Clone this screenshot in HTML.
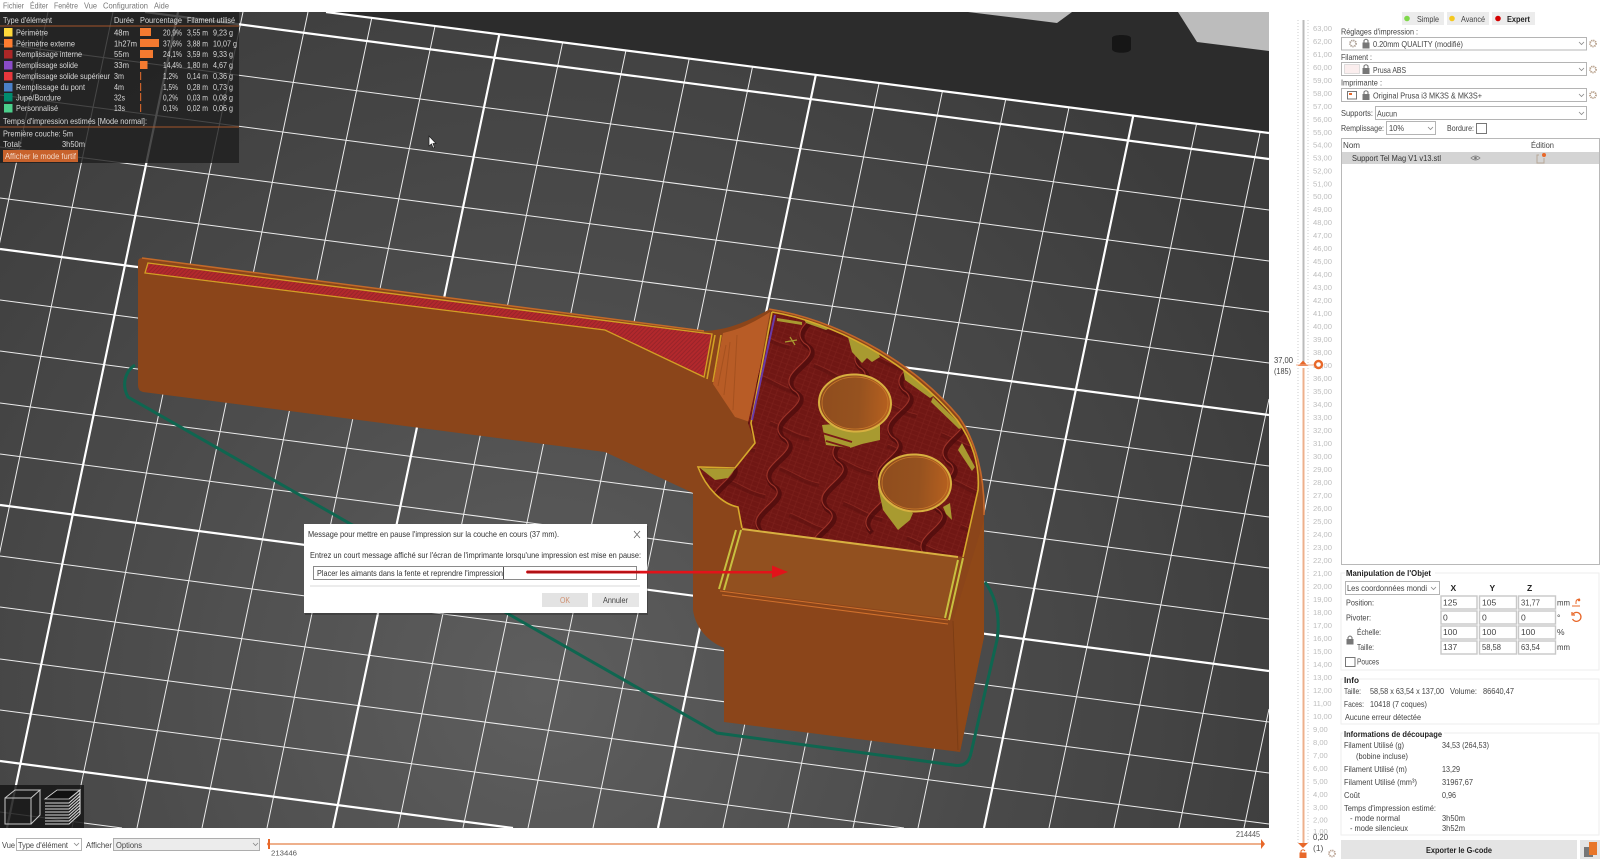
<!DOCTYPE html>
<html lang="fr"><head><meta charset="utf-8"><title>PrusaSlicer</title>
<style>
html,body{margin:0;padding:0;background:#fff;width:1600px;height:859px;overflow:hidden}
#f{position:absolute;left:0;top:0;width:1600px;height:859px;overflow:hidden}
svg{display:block;position:absolute;left:0;top:0;overflow:hidden;filter:blur(.3px)}
text{font-family:"Liberation Sans",sans-serif;font-size:8.5px;fill:#444}
.lg text{fill:#d8d8d8}
.b{font-weight:700;fill:#222}
.t text{font-size:7.6px;fill:#bdbdbd}
.box{fill:#fff;stroke:#b4b4b4;stroke-width:1}
.inp{fill:#fff;stroke:#c8c8c8;stroke-width:1.4}
.chev{fill:none;stroke:#888;stroke-width:.8}
</style></head><body><div id="f">
<svg width="1600" height="859" viewBox="0 0 1600 859" xmlns="http://www.w3.org/2000/svg">
<defs>
<radialGradient id="pl" gradientUnits="userSpaceOnUse" cx="540" cy="690" r="820"><stop offset="0" stop-color="#5e5e5e"/><stop offset=".55" stop-color="#4a4a4a"/><stop offset="1" stop-color="#3c3c3c"/></radialGradient>
<clipPath id="vp"><polygon points="0,12 1269,12 1269,828 0,828"/></clipPath>
<clipPath id="plate"><polygon points="0,12 326,12 1269,133 1269,828 0,828"/></clipPath>
<clipPath id="inf"><path id="infp" d="M772,312 C830,322 905,358 957,420 C972,440 980,465 978,490 L963,557 L742,528 L738,507 C722,504 706,488 698,467 L735,468 L755,443 L748,423 Z"/></clipPath>
<pattern id="hat" width="3" height="3" patternUnits="userSpaceOnUse" patternTransform="rotate(45)"><rect width="3" height="3" fill="#b2282c"/><rect width="1" height="3" fill="#98242a"/></pattern>
<pattern id="tex" width="14" height="14" patternUnits="userSpaceOnUse" patternTransform="rotate(20)"><rect width="14" height="14" fill="#701714"/><path d="M0,3H14M0,8H14M0,12H14M4,0V14M10,0V14" stroke="#7e201c" stroke-width=".6"/></pattern>
<pattern id="cell" width="55" height="47" patternUnits="userSpaceOnUse" patternTransform="rotate(-12)"><path d="M5,10C18,18 25,28 40,34" fill="none" stroke="#5a100e" stroke-width="4" stroke-opacity=".55"/><path d="M6,8C19,16 26,26 41,32" fill="none" stroke="#8f2a22" stroke-width=".7"/></pattern>
<path id="w" d="M815,296c24,14 -30,28 -11,47c24,14 -30,28 -11,47c24,14 -30,28 -11,47c24,14 -30,28 -11,47c24,14 -30,28 -11,47"/>
<g id="wv"><use href="#w" fill="none" stroke="#4f0c0c" stroke-width="5" stroke-opacity=".8" transform="translate(2,2)"/><use href="#w" fill="none" stroke="#9c3228" stroke-width="1.100"/></g>
<linearGradient id="disc" x1="0" x2="1" y1="0" y2="0"><stop offset="0" stop-color="#8f4d1e"/><stop offset=".55" stop-color="#96521f"/><stop offset="1" stop-color="#b8611f"/></linearGradient>
</defs>

<!-- viewport -->
<g clip-path="url(#vp)">
<rect x="0" y="12" width="1269" height="816" fill="#2c2c2c"/>
<polygon points="968,12 1057,23 1072,12" fill="#bcbcbc"/>
<polygon points="1178,12 1197,42 1269,51 1269,12" fill="#bcbcbc"/>
<path d="M1112,38C1112,34 1131,34 1131,38V49C1131,54 1112,54 1112,49Z" fill="#161616"/>
<g clip-path="url(#plate)">
<rect x="0" y="12" width="1269" height="816" fill="url(#pl)"/>
<!-- thin verticals -->
<path fill="none" stroke="#ececec" stroke-width="1" d="M-123,828L48,12M-58,828L113,12M72,828L243,12M137,828L308,12M202,828L373,12M267,828L438,12M398,828L569,12M463,828L634,12M528,828L699,12M593,828L764,12M723,828L894,12M788,828L959,12M853,828L1024,12M918,828L1089,12M1049,828L1220,12M1114,828L1269,90M1179,828L1269,399M1244,828L1269,709"/>
<!-- thin horizontals -->
<path fill="none" stroke="#ececec" stroke-width="1" d="M0,44L1269,210M0,95L1269,261M0,147L1269,312M0,198L1269,363M0,300L1269,466M0,351L1269,517M0,403L1269,568M0,454L1269,619M0,556L1269,722M0,607L1269,773M0,659L1269,824M0,710L904,828M0,812L122,828"/>
<!-- thick -->
<path fill="none" stroke="#fff" stroke-width="2.200" d="M7,828L178,12M333,828L504,12M658,828L829,12M984,828L1155,12M145,12L1269,159M0,249L1269,415M0,505L1269,671M0,761L513,828"/>
</g>
<path d="M326,12L1269,133" stroke="#fff" stroke-width="2.200" fill="none"/>

<!-- skirt -->
<path d="M135,365C124,372 122,386 128,397L717,733L953,765Q968,768 971,753L997,640C1000,620 998,600 985,582" fill="none" stroke="#0f6650" stroke-width="3"/>

<!-- model body -->
<path d="M142,258L704,331C730,330 750,320 770,309C830,319 907,355 959,417C975,440 985,475 984,520L984,637L960,752L724,722L724,648C705,640 695,625 693,610L693,493L605,452L143,392Q138,391 138,385L138,262Q138,258 142,258Z" fill="#8b451a"/>
<path d="M142,258L704,331" stroke="#c46a28" stroke-width="1.500" fill="none"/>
<!-- band -->
<polygon points="148,263 712,334 704,377 605,330 145,273" fill="url(#hat)" stroke="#d2a024" stroke-width="1.300"/>
<path d="M715,335L707,379M721,335L713,382" stroke="#d2a024" stroke-width="1.600" fill="none"/>
<path d="M723,333C742,329 756,321 770,312L750,422L735,417L713,384Z" fill="#b85c26"/>
<path d="M726,345L718,386M730,342L724,395M737,335L733,410" stroke="#a5511f" stroke-width="1" fill="none"/>
<!-- infill -->
<use href="#infp" fill="url(#tex)"/>
<g clip-path="url(#inf)">
<rect x="690" y="300" width="300" height="260" fill="url(#cell)"/>
<use href="#wv" transform="translate(-165,24)"/><use href="#wv" transform="translate(-110,0)"/><use href="#wv" transform="translate(-55,24)"/><use href="#wv"/><use href="#wv" transform="translate(55,24)"/><use href="#wv" transform="translate(110,0)"/><use href="#wv" transform="translate(165,24)"/><use href="#wv" transform="translate(220,0)"/>
<!-- olive patches -->
<path d="M848,337L853,337L877,350L880,357L872,362L867,358L862,363L852,352Z" fill="#a89a30"/>
<path d="M777,318L802,322L802,325L777,321Z" fill="#a89a30"/>
<path d="M803,318L830,328L826,330L806,323Z" fill="#a89a30"/>
<path d="M700,468L735,469L728,478L715,480Z" fill="#a89a30"/>
<path d="M903,370L935,395L930,398L905,380Z" fill="#a89a30"/>
<path d="M933,397L963,427L959,429L931,402Z" fill="#a89a30"/>
<path d="M962,443L975,467L972,471L958,450Z" fill="#a89a30"/>
<path d="M822,425L826,445L850,448L862,444L880,440L880,420Z" fill="#a89a30"/>
<path d="M822,433L852,442M826,441L850,448" stroke="#7a1a17" stroke-width="1.800"/>
<path d="M878,487L883,510L898,530L910,520L913,513L900,505Z" fill="#a89a30"/>
<path d="M943,507L950,503L952,520L946,514Z" fill="#a89a30"/>
<path d="M790,337L795,345M785,342L797,340" stroke="#a89a30" stroke-width="1.200"/>
</g>
<path d="M772,312C830,322 905,358 957,420C972,440 980,465 978,490L963,557" fill="none" stroke="#d6a92c" stroke-width="1.600"/>
<path d="M772,312L751,423L755,443L735,468L698,467C706,488 722,504 738,507L742,528" fill="none" stroke="#d6a92c" stroke-width="1.600"/>
<path d="M769,309C830,319 907,355 959,417C975,440 985,475 984,515" fill="none" stroke="#c4672a" stroke-width="1.600"/>
<path d="M775,315L752,420" stroke="#6a3aa8" stroke-width="2" fill="none"/>
<!-- discs -->
<ellipse cx="855" cy="403" rx="36" ry="28.500" fill="url(#disc)" stroke="#d8b040" stroke-width="2" transform="rotate(3 855 403)"/>
<ellipse cx="855" cy="403" rx="33" ry="26" fill="none" stroke="#c8792a" stroke-width=".8"/>
<ellipse cx="915" cy="483" rx="36" ry="28.500" fill="url(#disc)" stroke="#d8b040" stroke-width="2" transform="rotate(3 915 483)"/>
<ellipse cx="915" cy="483" rx="33" ry="26" fill="none" stroke="#c8792a" stroke-width=".8"/>
<!-- box -->
<polygon points="741,529 958,557 946,618 722,590" fill="#92501f"/>
<path d="M742,529L958,557" stroke="#d8b040" stroke-width="2" fill="none"/>
<path d="M741,530L724,590M736,530L719,589" stroke="#c8c040" stroke-width="2" fill="none"/>
<path d="M963,558L949,620M958,560L945,618" stroke="#c8c040" stroke-width="2" fill="none"/>
<path d="M720,591L948,620M722,595L948,624" stroke="#d0702c" stroke-width="1" fill="none"/>
<path d="M953,621L984,520L984,637L960,752Z" fill="#8f4818"/>
<path d="M953,621L958,750" stroke="#7a3c14" stroke-width=".8" fill="none"/>
</g>

<!-- legend -->
<rect x="0" y="12" width="239" height="151" fill="#1e1e1e" fill-opacity=".8"/>
<g class="lg">
<text x="3" y="23" textLength="49" lengthAdjust="spacingAndGlyphs">Type d'élément</text>
<text x="114" y="23" textLength="20" lengthAdjust="spacingAndGlyphs">Durée</text>
<text x="140" y="23" textLength="42" lengthAdjust="spacingAndGlyphs">Pourcentage</text>
<text x="187" y="23" textLength="48" lengthAdjust="spacingAndGlyphs">Filament utilisé</text>
<rect x="0" y="25.500" width="239" height="1" fill="#a3552a"/>
<rect x="4" y="28" width="8.500" height="8.500" fill="#ffd93b"/><rect x="4" y="39" width="8.500" height="8.500" fill="#ff7d30"/><rect x="4" y="50" width="8.500" height="8.500" fill="#ab2727"/><rect x="4" y="61" width="8.500" height="8.500" fill="#8a4cc8"/><rect x="4" y="72" width="8.500" height="8.500" fill="#e8373c"/><rect x="4" y="83" width="8.500" height="8.500" fill="#4a80c8"/><rect x="4" y="93" width="8.500" height="8.500" fill="#008c6e"/><rect x="4" y="104" width="8.500" height="8.500" fill="#4cd08c"/>
<rect x="140" y="28" width="11" height="8" fill="#f47a30"/><rect x="140" y="39" width="19" height="8" fill="#f47a30"/><rect x="140" y="50" width="13" height="8" fill="#f47a30"/><rect x="140" y="61" width="7.500" height="8" fill="#f47a30"/><rect x="140" y="72" width="1.200" height="8" fill="#c8622c"/><rect x="140" y="83" width="1.200" height="8" fill="#c8622c"/><rect x="140" y="93" width="1.200" height="8" fill="#c8622c"/><rect x="140" y="104" width="1.200" height="8" fill="#c8622c"/>
<text x="16" y="35.500" textLength="32" lengthAdjust="spacingAndGlyphs">Périmètre</text>
<text x="16" y="46.500" textLength="59" lengthAdjust="spacingAndGlyphs">Périmètre externe</text>
<text x="16" y="57" textLength="66" lengthAdjust="spacingAndGlyphs">Remplissage interne</text>
<text x="16" y="68" textLength="62" lengthAdjust="spacingAndGlyphs">Remplissage solide</text>
<text x="16" y="79" textLength="94" lengthAdjust="spacingAndGlyphs">Remplissage solide supérieur</text>
<text x="16" y="90" textLength="69" lengthAdjust="spacingAndGlyphs">Remplissage du pont</text>
<text x="16" y="100.500" textLength="45" lengthAdjust="spacingAndGlyphs">Jupe/Bordure</text>
<text x="16" y="111" textLength="42" lengthAdjust="spacingAndGlyphs">Personnalisé</text>
<text x="114" y="35.500" textLength="15" lengthAdjust="spacingAndGlyphs">48m</text><text x="114" y="46.500" textLength="23" lengthAdjust="spacingAndGlyphs">1h27m</text><text x="114" y="57" textLength="15" lengthAdjust="spacingAndGlyphs">55m</text><text x="114" y="68" textLength="15" lengthAdjust="spacingAndGlyphs">33m</text><text x="114" y="79" textLength="10" lengthAdjust="spacingAndGlyphs">3m</text><text x="114" y="90" textLength="10" lengthAdjust="spacingAndGlyphs">4m</text><text x="114" y="100.500" textLength="11" lengthAdjust="spacingAndGlyphs">32s</text><text x="114" y="111" textLength="11" lengthAdjust="spacingAndGlyphs">13s</text>
<text x="163" y="35.500" textLength="19" lengthAdjust="spacingAndGlyphs">20,9%</text><text x="163" y="46.500" textLength="19" lengthAdjust="spacingAndGlyphs">37,6%</text><text x="163" y="57" textLength="19" lengthAdjust="spacingAndGlyphs">24,1%</text><text x="163" y="68" textLength="19" lengthAdjust="spacingAndGlyphs">14,4%</text><text x="163" y="79" textLength="15" lengthAdjust="spacingAndGlyphs">1,2%</text><text x="163" y="90" textLength="15" lengthAdjust="spacingAndGlyphs">1,5%</text><text x="163" y="100.500" textLength="15" lengthAdjust="spacingAndGlyphs">0,2%</text><text x="163" y="111" textLength="15" lengthAdjust="spacingAndGlyphs">0,1%</text>
<text x="187" y="35.500" textLength="21" lengthAdjust="spacingAndGlyphs">3,55 m</text><text x="187" y="46.500" textLength="21" lengthAdjust="spacingAndGlyphs">3,88 m</text><text x="187" y="57" textLength="21" lengthAdjust="spacingAndGlyphs">3,59 m</text><text x="187" y="68" textLength="21" lengthAdjust="spacingAndGlyphs">1,80 m</text><text x="187" y="79" textLength="21" lengthAdjust="spacingAndGlyphs">0,14 m</text><text x="187" y="90" textLength="21" lengthAdjust="spacingAndGlyphs">0,28 m</text><text x="187" y="100.500" textLength="21" lengthAdjust="spacingAndGlyphs">0,03 m</text><text x="187" y="111" textLength="21" lengthAdjust="spacingAndGlyphs">0,02 m</text>
<text x="213" y="35.500" textLength="20" lengthAdjust="spacingAndGlyphs">9,23 g</text><text x="213" y="46.500" textLength="24" lengthAdjust="spacingAndGlyphs">10,07 g</text><text x="213" y="57" textLength="20" lengthAdjust="spacingAndGlyphs">9,33 g</text><text x="213" y="68" textLength="20" lengthAdjust="spacingAndGlyphs">4,67 g</text><text x="213" y="79" textLength="20" lengthAdjust="spacingAndGlyphs">0,36 g</text><text x="213" y="90" textLength="20" lengthAdjust="spacingAndGlyphs">0,73 g</text><text x="213" y="100.500" textLength="20" lengthAdjust="spacingAndGlyphs">0,08 g</text><text x="213" y="111" textLength="20" lengthAdjust="spacingAndGlyphs">0,06 g</text>
<text x="3" y="124" textLength="144" lengthAdjust="spacingAndGlyphs">Temps d'impression estimés [Mode normal]:</text>
<rect x="0" y="126.500" width="239" height="1" fill="#a3552a"/>
<text x="3" y="136.500" textLength="70" lengthAdjust="spacingAndGlyphs">Première couche: 5m</text>
<text x="3" y="147" textLength="19" lengthAdjust="spacingAndGlyphs">Total:</text><text x="62" y="147" textLength="23" lengthAdjust="spacingAndGlyphs">3h50m</text>
<rect x="3" y="150" width="75" height="12" fill="#c8622c"/>
<text x="5" y="159" textLength="71" lengthAdjust="spacingAndGlyphs" style="fill:#f2d8c8">Afficher le mode furtif</text>
</g>

<!-- cursor -->
<path d="M429,136L429,146L431.500,144L433,148L434.500,147.500L433,143.500L436,143.500Z" fill="#fff" stroke="#222" stroke-width=".7"/>

<!-- view toggle -->
<rect x="0" y="785" width="84" height="43" fill="#161616" fill-opacity=".85"/>
<path d="M5,798H31V824H5ZM5,798L15,790H40L31,798M40,790V815L31,824" fill="none" stroke="#c8c8c8" stroke-width="1"/>
<path d="M45,799L57,790H80L69,799Z" fill="#111" stroke="#ddd" stroke-width=".8"/>
<path d="M45,803H69L80,793M45,806H69L80,796M45,809H69L80,799M45,812H69L80,802M45,815H69L80,805M45,818H69L80,808M45,821H69L80,811M45,824H69L80,814M69,799L80,790V814" fill="none" stroke="#d8d8d8" stroke-width="1.100"/>

<!-- dialog -->
<rect x="305" y="526" width="343" height="89" fill="#000" fill-opacity=".22"/>
<rect x="304" y="524" width="343" height="89" fill="#fff"/>
<text x="308" y="537" textLength="251" lengthAdjust="spacingAndGlyphs" style="fill:#333">Message pour mettre en pause l'impression sur la couche en cours (37 mm).</text>
<path d="M634,531L640,538M640,531L634,538" stroke="#666" stroke-width=".8" fill="none"/>
<text x="310" y="558" textLength="331" lengthAdjust="spacingAndGlyphs" style="fill:#333">Entrez un court message affiché sur l'écran de l'imprimante lorsqu'une impression est mise en pause:</text>
<rect x="313.500" y="566.500" width="323" height="13" fill="#fff" stroke="#8a8a8a"/>
<text x="317" y="576" textLength="186" lengthAdjust="spacingAndGlyphs" style="fill:#333">Placer les aimants dans la fente et reprendre l'impression</text>
<rect x="503" y="567" width=".8" height="12" fill="#222"/>
<rect x="310" y="585.500" width="330" height="1" fill="#d8d8d8"/>
<rect x="542" y="593" width="46" height="14" fill="#e3e3e3"/><text x="560" y="603" textLength="10" lengthAdjust="spacingAndGlyphs" style="fill:#d09070">OK</text>
<rect x="592" y="593" width="47" height="14" fill="#e6e6e6"/><text x="603" y="603" textLength="25" lengthAdjust="spacingAndGlyphs" style="fill:#444">Annuler</text>

<!-- red arrow -->
<path d="M527,570.500L772,571V565.500L788,572L772,578V573.500L527,573.500Q525,572 527,570.500Z" fill="#e2131a"/>
<path d="M527,571L640,571.500V573L527,573.500Z" fill="#b01015"/>

<!-- top menu -->
<rect x="0" y="0" width="1600" height="12" fill="#fff"/>
<text x="3" y="8.500" textLength="21" lengthAdjust="spacingAndGlyphs" style="fill:#777">Fichier</text>
<text x="30" y="8.500" textLength="18" lengthAdjust="spacingAndGlyphs" style="fill:#777">Éditer</text>
<text x="54" y="8.500" textLength="24" lengthAdjust="spacingAndGlyphs" style="fill:#777">Fenêtre</text>
<text x="84" y="8.500" textLength="13" lengthAdjust="spacingAndGlyphs" style="fill:#777">Vue</text>
<text x="103" y="8.500" textLength="45" lengthAdjust="spacingAndGlyphs" style="fill:#777">Configuration</text>
<text x="154" y="8.500" textLength="15" lengthAdjust="spacingAndGlyphs" style="fill:#777">Aide</text>

<!-- bottom strip -->
<text x="2" y="848" textLength="13" lengthAdjust="spacingAndGlyphs">Vue</text>
<rect x="16.500" y="838.500" width="65" height="12" class="box"/>
<text x="18" y="848" textLength="50" lengthAdjust="spacingAndGlyphs">Type d'élément</text><path class="chev" d="M74,843l2.500,2.500l2.500,-2.500"/>
<text x="86" y="848" textLength="26" lengthAdjust="spacingAndGlyphs">Afficher</text>
<rect x="113.500" y="838.500" width="146" height="12" fill="#ececec" stroke="#adadad"/>
<text x="116" y="848" textLength="26" lengthAdjust="spacingAndGlyphs">Options</text><path class="chev" d="M253,843l2.500,2.500l2.500,-2.500"/>
<rect x="268" y="843" width="994" height="2" fill="#eeb08c"/>
<path d="M270,839V849L267,844Z" fill="#e8682a"/><rect x="268" y="839" width="2" height="10" fill="#e8682a"/>
<path d="M1261,839L1265,844L1261,849Z" fill="#e8682a"/>
<text x="271" y="855.500" textLength="26" lengthAdjust="spacingAndGlyphs" style="fill:#555;font-size:7.5px">213446</text>
<text x="1236" y="837" textLength="24" lengthAdjust="spacingAndGlyphs" style="fill:#555">214445</text>

<!-- vertical slider -->
<path d="M1298,20V845M1308,20V845" stroke="#ccc" stroke-width="1" stroke-dasharray="1 2" fill="none"/>
<rect x="1302.500" y="20" width="2" height="342" fill="#bbb"/>
<rect x="1302.500" y="368" width="2" height="475" fill="#eeb08c"/>
<path d="M1298,366L1303,360.500L1308,366Z" fill="#e8682a"/><rect x="1296" y="364.500" width="20" height="1" fill="#f0b090"/>
<path d="M1298,843L1303,848L1308,843Z" fill="#e8682a"/>
<rect x="1299.500" y="852.500" width="7" height="5.500" fill="#e8682a"/><path d="M1301,852.500v-1.500q2,-2.500 4,0" fill="none" stroke="#e8682a" stroke-width="1.100"/>
<circle cx="1332" cy="853.500" r="3" fill="none" stroke="#b8a090" stroke-width="1.800" stroke-dasharray="1.200 .8"/>
<text x="1274" y="363" textLength="19" lengthAdjust="spacingAndGlyphs">37,00</text>
<text x="1274" y="374" textLength="17" lengthAdjust="spacingAndGlyphs">(185)</text>
<text x="1313" y="840" textLength="15" lengthAdjust="spacingAndGlyphs">0,20</text>
<text x="1313" y="851" style="fill:#555">(1)</text>
<g class="t">
<text x="1313" y="31">63,00</text><text x="1313" y="44">62,00</text><text x="1313" y="57">61,00</text><text x="1313" y="70">60,00</text><text x="1313" y="83">59,00</text><text x="1313" y="96">58,00</text><text x="1313" y="109">57,00</text><text x="1313" y="122">56,00</text><text x="1313" y="135">55,00</text><text x="1313" y="147.500">54,00</text><text x="1313" y="160.500">53,00</text><text x="1313" y="173.500">52,00</text><text x="1313" y="186.500">51,00</text><text x="1313" y="199">50,00</text><text x="1313" y="212">49,00</text><text x="1313" y="225">48,00</text><text x="1313" y="238">47,00</text><text x="1313" y="251">46,00</text><text x="1313" y="264">45,00</text><text x="1313" y="277">44,00</text><text x="1313" y="290">43,00</text><text x="1313" y="303">42,00</text><text x="1313" y="316">41,00</text><text x="1313" y="329">40,00</text><text x="1313" y="342">39,00</text><text x="1313" y="355">38,00</text><text x="1313" y="368">37,00</text><text x="1313" y="381">36,00</text><text x="1313" y="394">35,00</text><text x="1313" y="407">34,00</text><text x="1313" y="420">33,00</text><text x="1313" y="433">32,00</text><text x="1313" y="446">31,00</text><text x="1313" y="459">30,00</text><text x="1313" y="472">29,00</text><text x="1313" y="485">28,00</text><text x="1313" y="498">27,00</text><text x="1313" y="511">26,00</text><text x="1313" y="524">25,00</text><text x="1313" y="537">24,00</text><text x="1313" y="550">23,00</text><text x="1313" y="563">22,00</text><text x="1313" y="576">21,00</text><text x="1313" y="589">20,00</text><text x="1313" y="602">19,00</text><text x="1313" y="615">18,00</text><text x="1313" y="628">17,00</text><text x="1313" y="641">16,00</text><text x="1313" y="654">15,00</text><text x="1313" y="667">14,00</text><text x="1313" y="680">13,00</text><text x="1313" y="693">12,00</text><text x="1313" y="706">11,00</text><text x="1313" y="719">10,00</text><text x="1313" y="732">9,00</text><text x="1313" y="745">8,00</text><text x="1313" y="758">7,00</text><text x="1313" y="771">6,00</text><text x="1313" y="784">5,00</text><text x="1313" y="797">4,00</text><text x="1313" y="810">3,00</text><text x="1313" y="822.500">2,00</text><text x="1313" y="834">1,00</text>
</g>
<circle cx="1318.500" cy="364.500" r="3.500" fill="#fff" stroke="#e8682a" stroke-width="2.400"/>

<!-- mode buttons -->
<rect x="1402" y="12" width="42" height="13" fill="#ececec"/><rect x="1447" y="12" width="42" height="13" fill="#ececec"/><rect x="1492" y="12" width="43" height="13" fill="#ececec"/>
<circle cx="1407" cy="18.500" r="2.800" fill="#7fd84a"/><circle cx="1452" cy="18.500" r="2.800" fill="#f4c820"/><circle cx="1498" cy="18.500" r="2.800" fill="#d40000"/>
<text x="1417" y="22" textLength="22" lengthAdjust="spacingAndGlyphs">Simple</text><text x="1461" y="22" textLength="24" lengthAdjust="spacingAndGlyphs">Avancé</text><text x="1507" y="22" textLength="23" lengthAdjust="spacingAndGlyphs" class="b">Expert</text>

<!-- settings -->
<text x="1341" y="34.500" textLength="77" lengthAdjust="spacingAndGlyphs">Réglages d'impression :</text>
<rect x="1341.500" y="37.500" width="245" height="12.500" class="box"/>
<circle cx="1353" cy="43.500" r="3" fill="none" stroke="#a89a8e" stroke-width="1.800" stroke-dasharray="1.200 .8"/>
<rect x="1362.500" y="42.500" width="7" height="6" fill="#777"/><path d="M1364,42.500v-2q2,-2.500 4,0v2" fill="none" stroke="#777" stroke-width="1.100"/>
<text x="1373" y="47" textLength="90" lengthAdjust="spacingAndGlyphs">0.20mm QUALITY (modifié)</text><path class="chev" d="M1579,42l2.500,2.500l2.500,-2.500"/>
<circle cx="1593" cy="43.500" r="3" fill="none" stroke="#b49c86" stroke-width="1.800" stroke-dasharray="1.200 .8"/>
<text x="1341" y="60" textLength="31" lengthAdjust="spacingAndGlyphs">Filament :</text>
<rect x="1341.500" y="62.500" width="245" height="13" class="box"/>
<rect x="1344.500" y="64.500" width="15" height="9" fill="#fbeeee" stroke="#ccc" stroke-width=".6"/>
<rect x="1362.500" y="68" width="7" height="6" fill="#777"/><path d="M1364,68v-2q2,-2.500 4,0v2" fill="none" stroke="#777" stroke-width="1.100"/>
<text x="1373" y="73" textLength="33" lengthAdjust="spacingAndGlyphs">Prusa ABS</text><path class="chev" d="M1579,68l2.500,2.500l2.500,-2.500"/>
<circle cx="1593" cy="69.500" r="3" fill="none" stroke="#b49c86" stroke-width="1.800" stroke-dasharray="1.200 .8"/>
<text x="1341" y="85.500" textLength="41" lengthAdjust="spacingAndGlyphs">Imprimante :</text>
<rect x="1341.500" y="88.500" width="245" height="13" class="box"/>
<rect x="1347.500" y="91.500" width="9" height="7.500" fill="#fff" stroke="#777"/><rect x="1349" y="93" width="3" height="2" fill="#e8682a"/>
<rect x="1362.500" y="94" width="7" height="6" fill="#777"/><path d="M1364,94v-2q2,-2.500 4,0v2" fill="none" stroke="#777" stroke-width="1.100"/>
<text x="1373" y="98.500" textLength="109" lengthAdjust="spacingAndGlyphs">Original Prusa i3 MK3S &amp; MK3S+</text><path class="chev" d="M1579,94l2.500,2.500l2.500,-2.500"/>
<circle cx="1593" cy="95" r="3" fill="none" stroke="#b49c86" stroke-width="1.800" stroke-dasharray="1.200 .8"/>
<text x="1341" y="116" textLength="32" lengthAdjust="spacingAndGlyphs">Supports:</text>
<rect x="1375.500" y="106.500" width="211" height="13" class="box"/>
<text x="1377" y="116.500" textLength="20" lengthAdjust="spacingAndGlyphs">Aucun</text><path class="chev" d="M1579,112l2.500,2.500l2.500,-2.500"/>
<text x="1341" y="131" textLength="43" lengthAdjust="spacingAndGlyphs">Remplissage:</text>
<rect x="1386.500" y="121.500" width="49" height="13" class="box"/>
<text x="1389" y="131" textLength="15" lengthAdjust="spacingAndGlyphs">10%</text><path class="chev" d="M1428,127l2.500,2.500l2.500,-2.500"/>
<text x="1447" y="131" textLength="27" lengthAdjust="spacingAndGlyphs">Bordure:</text>
<rect x="1476.500" y="123.500" width="10" height="10" class="box" style="stroke:#777"/>

<!-- object list -->
<rect x="1341.500" y="138.500" width="258" height="426" fill="#fff" stroke="#b8b8b8"/>
<text x="1343" y="148" textLength="17" lengthAdjust="spacingAndGlyphs">Nom</text>
<text x="1531" y="148" textLength="23" lengthAdjust="spacingAndGlyphs">Édition</text>
<rect x="1342" y="152" width="257" height="12" fill="#d4d4d4"/>
<text x="1352" y="161" textLength="89" lengthAdjust="spacingAndGlyphs" style="fill:#333">Support Tel Mag V1 v13.stl</text>
<path d="M1471,158q4.500,-4 9,0q-4.500,4 -9,0z" fill="none" stroke="#777" stroke-width=".8"/><circle cx="1475.500" cy="158" r="1.300" fill="#777"/>
<path d="M1539,155h-2v8h7v-5" fill="none" stroke="#b8a898" stroke-width="1"/><circle cx="1544" cy="155" r="2" fill="#e8682a"/>

<!-- manipulation -->
<rect x="1341" y="573" width="258" height="97" fill="#fff" stroke="#eee"/>
<rect x="1345" y="570" width="90" height="8" fill="#fff"/>
<text x="1346" y="576" textLength="85" lengthAdjust="spacingAndGlyphs" class="b">Manipulation de l'Objet</text>
<rect x="1345.500" y="581.500" width="94" height="13" class="box"/>
<text x="1347" y="591" textLength="80" lengthAdjust="spacingAndGlyphs">Les coordonnées mondi</text><path class="chev" d="M1431,587l2.500,2.500l2.500,-2.500"/>
<text x="1450.500" y="591" class="b">X</text><text x="1489.500" y="591" class="b">Y</text><text x="1527" y="591" class="b">Z</text>
<rect x="1441" y="596" width="36" height="13" class="inp"/><rect x="1479.500" y="596" width="37" height="13" class="inp"/><rect x="1518.500" y="596" width="37" height="13" class="inp"/>
<rect x="1441" y="611" width="36" height="13" class="inp"/><rect x="1479.500" y="611" width="37" height="13" class="inp"/><rect x="1518.500" y="611" width="37" height="13" class="inp"/>
<rect x="1441" y="626" width="36" height="13" class="inp"/><rect x="1479.500" y="626" width="37" height="13" class="inp"/><rect x="1518.500" y="626" width="37" height="13" class="inp"/>
<rect x="1441" y="641" width="36" height="13" class="inp"/><rect x="1479.500" y="641" width="37" height="13" class="inp"/><rect x="1518.500" y="641" width="37" height="13" class="inp"/>
<text x="1346" y="605.500" textLength="28" lengthAdjust="spacingAndGlyphs">Position:</text>
<text x="1346" y="620.500" textLength="25" lengthAdjust="spacingAndGlyphs">Pivoter:</text>
<text x="1357" y="635" textLength="24" lengthAdjust="spacingAndGlyphs">Échelle:</text>
<text x="1357" y="650" textLength="17" lengthAdjust="spacingAndGlyphs">Taille:</text>
<text x="1443" y="605.500">125</text><text x="1482" y="605.500">105</text><text x="1521" y="605.500" textLength="19" lengthAdjust="spacingAndGlyphs">31,77</text>
<text x="1443" y="620.500">0</text><text x="1482" y="620.500">0</text><text x="1521" y="620.500">0</text>
<text x="1443" y="635">100</text><text x="1482" y="635">100</text><text x="1521" y="635">100</text>
<text x="1443" y="650">137</text><text x="1482" y="650" textLength="19" lengthAdjust="spacingAndGlyphs">58,58</text><text x="1521" y="650" textLength="19" lengthAdjust="spacingAndGlyphs">63,54</text>
<text x="1557" y="605.500" textLength="13" lengthAdjust="spacingAndGlyphs">mm</text><text x="1557" y="620.500">°</text><text x="1557" y="635">%</text><text x="1557" y="650" textLength="13" lengthAdjust="spacingAndGlyphs">mm</text>
<path d="M1572,606h8M1576,604v-2q0,-3 4,-3" fill="none" stroke="#e8682a" stroke-width="1"/><circle cx="1579" cy="600" r="1.300" fill="#e8682a"/>
<path d="M1573,614a4.500,4.500 0 1 1 -0.500,5M1572,612v3h3" fill="none" stroke="#e8682a" stroke-width="1.300"/>
<rect x="1346.500" y="639" width="7" height="5.500" fill="#777"/><path d="M1348,639v-1.500q2,-3 4,0v1.500" fill="none" stroke="#777" stroke-width="1.100"/>
<rect x="1345.500" y="657.500" width="9.500" height="9" class="box" style="stroke:#777"/>
<text x="1357" y="664.500" textLength="22" lengthAdjust="spacingAndGlyphs">Pouces</text>

<!-- info -->
<rect x="1341" y="679" width="258" height="45" fill="#fff" stroke="#eee"/>
<rect x="1343" y="674" width="16" height="8" fill="#fff"/>
<text x="1344" y="683" textLength="15" lengthAdjust="spacingAndGlyphs" class="b">Info</text>
<text x="1344" y="694" textLength="17" lengthAdjust="spacingAndGlyphs">Taille:</text>
<text x="1370" y="694" textLength="74" lengthAdjust="spacingAndGlyphs">58,58 x 63,54 x 137,00</text>
<text x="1450" y="694" textLength="27" lengthAdjust="spacingAndGlyphs">Volume:</text>
<text x="1483" y="694" textLength="31" lengthAdjust="spacingAndGlyphs">86640,47</text>
<text x="1344" y="707" textLength="20" lengthAdjust="spacingAndGlyphs">Faces:</text>
<text x="1370" y="707" textLength="57" lengthAdjust="spacingAndGlyphs">10418 (7 coques)</text>
<text x="1345" y="720" textLength="76" lengthAdjust="spacingAndGlyphs">Aucune erreur détectée</text>

<!-- slicing info -->
<rect x="1341" y="733" width="258" height="102" fill="#fff" stroke="#eee"/>
<rect x="1343" y="729" width="101" height="8" fill="#fff"/>
<text x="1344" y="737" textLength="98" lengthAdjust="spacingAndGlyphs" class="b">Informations de découpage</text>
<text x="1344" y="748" textLength="60" lengthAdjust="spacingAndGlyphs">Filament Utilisé (g)</text>
<text x="1442" y="748" textLength="47" lengthAdjust="spacingAndGlyphs">34,53 (264,53)</text>
<text x="1356" y="759" textLength="52" lengthAdjust="spacingAndGlyphs">(bobine incluse)</text>
<text x="1344" y="772" textLength="63" lengthAdjust="spacingAndGlyphs">Filament Utilisé (m)</text><text x="1442" y="772" textLength="18" lengthAdjust="spacingAndGlyphs">13,29</text>
<text x="1344" y="785" textLength="73" lengthAdjust="spacingAndGlyphs">Filament Utilisé (mm³)</text><text x="1442" y="785" textLength="31" lengthAdjust="spacingAndGlyphs">31967,67</text>
<text x="1344" y="798" textLength="16" lengthAdjust="spacingAndGlyphs">Coût</text><text x="1442" y="798" textLength="14" lengthAdjust="spacingAndGlyphs">0,96</text>
<text x="1344" y="811" textLength="92" lengthAdjust="spacingAndGlyphs">Temps d'impression estimé:</text>
<text x="1350" y="821" textLength="50" lengthAdjust="spacingAndGlyphs">- mode normal</text><text x="1442" y="821" textLength="23" lengthAdjust="spacingAndGlyphs">3h50m</text>
<text x="1350" y="831" textLength="58" lengthAdjust="spacingAndGlyphs">- mode silencieux</text><text x="1442" y="831" textLength="23" lengthAdjust="spacingAndGlyphs">3h52m</text>

<!-- export -->
<rect x="1341" y="840" width="236" height="19" fill="#e4e4e4"/>
<text x="1426" y="853" textLength="66" lengthAdjust="spacingAndGlyphs" class="b">Exporter le G-code</text>
<rect x="1580" y="840" width="20" height="19" fill="#e4e4e4"/>
<rect x="1584" y="847" width="9" height="10" fill="#777"/><rect x="1589" y="842" width="8" height="13" fill="#e8762a"/>
</svg>
</div></body></html>
